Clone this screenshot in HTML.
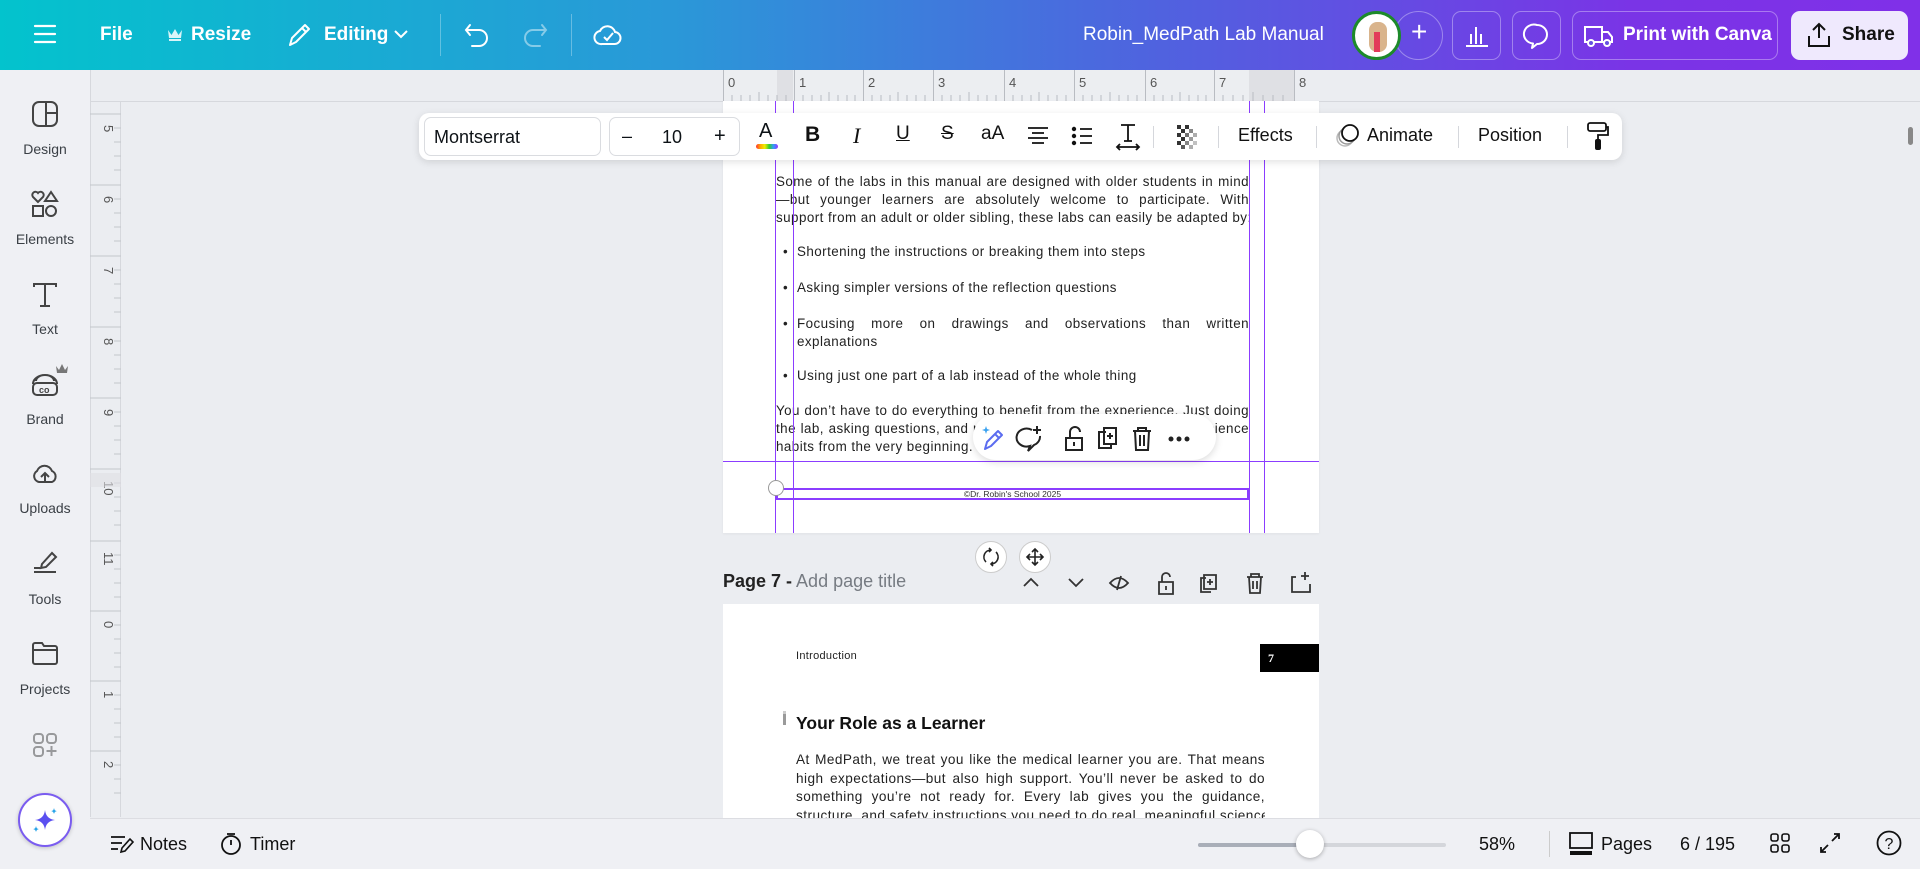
<!DOCTYPE html>
<html><head><meta charset="utf-8">
<style>
*{box-sizing:border-box;margin:0;padding:0}
body{width:1920px;height:869px;overflow:hidden;background:#ebedf1;font-family:"Liberation Sans",sans-serif;position:relative;color:#0d1216}
.a{position:absolute}
.hdr{left:0;top:0;width:1920px;height:70px;background:linear-gradient(90deg,#03c3cd 0%,#2a98d8 35%,#4f63df 60%,#7a34e6 85%,#8030e8 100%)}
.hw{color:#fff;font-size:19px;font-weight:bold;top:24px}
.hb{top:11px;height:49px;border:1px solid rgba(255,255,255,.35);border-radius:9px}
.side{left:0;top:70px;width:90px;height:799px;background:#eff0f4}
.si{left:0;width:90px;text-align:center;font-size:14px;color:#3a3f45}
.page{background:#fff}
.vl{width:1px;background:#8b3dff}
.txt{font-size:13.4px;line-height:17.8px;color:#222;letter-spacing:.45px;white-space:nowrap}
.j{text-align:justify;text-align-last:justify;white-space:nowrap}
.tb{left:419px;top:113px;width:1203px;height:47px;background:#fff;border-radius:10px;box-shadow:0 2px 8px rgba(0,0,0,.12)}
.tdiv{width:1px;height:22px;background:#d5d7dc;top:13px}
.ti{top:10px;font-size:19px;color:#111}
.bot{left:90px;top:818px;width:1830px;height:51px;background:#eff0f4;border-top:1px solid #dcdde2}
.bt{top:15px;font-size:18px;color:#111}
svg{overflow:visible}
</style></head><body>

<div class="a hdr">
 <svg class="a" style="left:34px;top:24px" width="22" height="20"><path d="M1 2H21M1 10H21M1 18H21" stroke="#fff" stroke-width="2.2" stroke-linecap="round"/></svg>
 <div class="a hw" style="left:100px">File</div>
 <svg class="a" style="left:167px;top:27px" width="16" height="14"><path d="M1 3L4.5 8L8 2L11.5 8L15 3L14 11H2Z" fill="#fff" opacity=".85"/><rect x="2" y="12" width="12" height="2" fill="#fff" opacity=".85"/></svg>
 <div class="a hw" style="left:191px">Resize</div>
 <svg class="a" style="left:287px;top:22px" width="24" height="26"><path d="M3 23L5 16L18 3L22 7L9 20Z M15 6L19 10" fill="none" stroke="#fff" stroke-width="2" stroke-linejoin="round"/></svg>
 <div class="a hw" style="left:324px">Editing</div>
 <svg class="a" style="left:394px;top:30px" width="14" height="9"><path d="M1 1L7 7L13 1" fill="none" stroke="#fff" stroke-width="2"/></svg>
 <div class="a" style="left:440px;top:14px;width:1px;height:42px;background:rgba(255,255,255,.3)"></div>
 <svg class="a" style="left:464px;top:22px" width="26" height="26"><path d="M6 3L2 8L6 13M2 8H15A8 8 0 0 1 15 24H8" fill="none" stroke="#fff" stroke-width="2" stroke-linecap="round"/></svg>
 <svg class="a" style="left:522px;top:22px" width="26" height="26" opacity=".45"><path d="M20 3L24 8L20 13M24 8H11A8 8 0 0 0 11 24H18" fill="none" stroke="#fff" stroke-width="2" stroke-linecap="round"/></svg>
 <div class="a" style="left:571px;top:14px;width:1px;height:42px;background:rgba(255,255,255,.3)"></div>
 <svg class="a" style="left:594px;top:20px" width="28" height="28"><path d="M8 24H20A6 6 0 0 0 21 12A8 8 0 0 0 6 11A6.5 6.5 0 0 0 8 24Z" fill="none" stroke="#fff" stroke-width="2"/><path d="M10 17L13 20L19 13" fill="none" stroke="#fff" stroke-width="2"/></svg>
 <div class="a" style="left:1083px;top:24px;color:#fff;font-size:19px">Robin_MedPath Lab Manual</div>
 <div class="a" style="left:1394px;top:11px;width:49px;height:49px;border:1px solid rgba(255,255,255,.35);border-radius:50%"></div>
 <div class="a" style="left:1411px;top:16px;color:#fff;font-size:28px;font-weight:300">+</div>
 <div class="a" style="left:1352px;top:11px;width:49px;height:49px;border-radius:50%;background:#fff;border:3px solid #1d8a2a;overflow:hidden"><div class="a" style="left:14px;top:8px;width:18px;height:30px;background:#d9b48c;border-radius:8px"></div><div class="a" style="left:19px;top:18px;width:6px;height:20px;background:#e23b5a"></div></div>
 <div class="a hb" style="left:1452px;width:49px"></div>
 <svg class="a" style="left:1465px;top:24px" width="24" height="24"><path d="M1 22H23M6 20V10M11 20V3M16 20V10" stroke="#fff" stroke-width="2"/></svg>
 <div class="a hb" style="left:1512px;width:49px"></div>
 <svg class="a" style="left:1524px;top:23px" width="26" height="26"><path d="M13 2A10 9.5 0 1 0 9 20.5L8 25L13 21A10 9.5 0 0 0 13 2Z" fill="none" stroke="#fff" stroke-width="2" stroke-linejoin="round"/></svg>
 <div class="a hb" style="left:1572px;width:206px"></div>
 <svg class="a" style="left:1584px;top:25px" width="30" height="22"><path d="M1 2H18V17H1Z M18 7H24L28 12V17H18" fill="none" stroke="#fff" stroke-width="2"/><circle cx="7" cy="18" r="3" fill="#6650e2" stroke="#fff" stroke-width="2"/><circle cx="23" cy="18" r="3" fill="#6650e2" stroke="#fff" stroke-width="2"/></svg>
 <div class="a hw" style="left:1623px">Print with Canva</div>
 <div class="a" style="left:1791px;top:11px;width:117px;height:49px;background:#efe9fd;border-radius:9px"></div>
 <svg class="a" style="left:1806px;top:22px" width="26" height="26"><path d="M13 16V2M7 8L13 2L19 8M3 14V24H23V14" fill="none" stroke="#111" stroke-width="2"/></svg>
 <div class="a" style="left:1842px;top:24px;font-size:19px;font-weight:bold;color:#111">Share</div>
</div>

<div class="a side"></div>
<svg class="a" style="left:32px;top:101px" width="26" height="26"><rect x="1" y="1" width="24" height="24" rx="6" fill="none" stroke="#444" stroke-width="2"/><path d="M14 1V25M14 12H25" stroke="#444" stroke-width="2"/></svg>
<div class="a si" style="top:141px">Design</div>
<svg class="a" style="left:32px;top:191px" width="26" height="26"><path d="M6 11L1 6A3 3 0 0 1 6 2A3 3 0 0 1 11 6Z" fill="none" stroke="#444" stroke-width="2"/><path d="M19 1L25 10H13Z" fill="none" stroke="#444" stroke-width="2"/><rect x="1" y="15" width="10" height="10" fill="none" stroke="#444" stroke-width="2"/><circle cx="19" cy="20" r="5" fill="none" stroke="#444" stroke-width="2"/></svg>
<div class="a si" style="top:231px">Elements</div>
<svg class="a" style="left:33px;top:283px" width="24" height="24"><path d="M1 4V1H23V4M12 1V23M7 23H17" fill="none" stroke="#444" stroke-width="2"/></svg>
<div class="a si" style="top:321px">Text</div>
<svg class="a" style="left:31px;top:372px" width="28" height="24"><path d="M2 12A12 9 0 0 1 26 12M5 9A9 6 0 0 1 23 9" fill="none" stroke="#444" stroke-width="2"/><rect x="2" y="11" width="24" height="12" rx="4" fill="none" stroke="#444" stroke-width="2"/><text x="8" y="21" font-size="9" font-weight="bold" fill="#444" font-family="Liberation Sans">co</text></svg>
<svg class="a" style="left:56px;top:364px" width="12" height="9"><path d="M0 2L3 6L6 0L9 6L12 2L11 9H1Z" fill="#777"/></svg>
<div class="a si" style="top:411px">Brand</div>
<svg class="a" style="left:31px;top:462px" width="28" height="22"><path d="M8 20H21A6 6 0 0 0 21 9A8 8 0 0 0 6 9A6 6 0 0 0 8 20Z" fill="none" stroke="#444" stroke-width="2"/><path d="M14 20V12M10 15L14 11L18 15" fill="none" stroke="#444" stroke-width="2"/></svg>
<div class="a si" style="top:500px">Uploads</div>
<svg class="a" style="left:32px;top:550px" width="28" height="24"><path d="M10 14L20 3L24 7L14 17L9 18Z" fill="none" stroke="#444" stroke-width="2"/><path d="M2 18H8M2 22H24" stroke="#444" stroke-width="2"/></svg>
<div class="a si" style="top:591px">Tools</div>
<svg class="a" style="left:32px;top:641px" width="26" height="24"><path d="M1 4A2 2 0 0 1 3 2H10L12 5H23A2 2 0 0 1 25 7V21A2 2 0 0 1 23 23H3A2 2 0 0 1 1 21Z M1 9H25" fill="none" stroke="#444" stroke-width="2"/></svg>
<div class="a si" style="top:681px">Projects</div>
<svg class="a" style="left:33px;top:733px" width="24" height="24" opacity=".5"><rect x="1" y="1" width="9" height="9" rx="3" fill="none" stroke="#444" stroke-width="2"/><rect x="14" y="1" width="9" height="9" rx="3" fill="none" stroke="#444" stroke-width="2"/><rect x="1" y="14" width="9" height="9" rx="3" fill="none" stroke="#444" stroke-width="2"/><path d="M18.5 13V23M13.5 18H23.5" stroke="#444" stroke-width="2"/></svg>
<div class="a" style="left:18px;top:793px;width:54px;height:54px;border-radius:50%;background:#fff;border:2px solid #7a5cf0;box-shadow:0 1px 4px rgba(0,0,0,.2)"></div>
<svg class="a" style="left:30px;top:806px" width="30" height="28"><path d="M15 4Q16 13 25 14Q16 15 15 24Q14 15 5 14Q14 13 15 4Z" fill="#5a4ff0"/><path d="M24 2Q24.5 5 27 5Q24.5 5.5 24 8Q23.5 5.5 21 5Q23.5 5 24 2Z" fill="#2aa5e8"/><path d="M6 20Q6.5 23 9 23Q6.5 23.5 6 26Q5.5 23.5 3 23Q5.5 23 6 20Z" fill="#2aa5e8"/></svg>

<!-- rulers -->
<div class="a" style="left:90px;top:70px;width:1px;height:747px;background:#d6d8dd"></div>
<div class="a" style="left:120px;top:101px;width:1px;height:716px;background:#d6d8dd"></div>
<div class="a" style="left:90px;top:101px;width:1830px;height:1px;background:#d6d8dd"></div>
<div class="a" style="left:723px;top:70px;width:572px;height:31px;background:#eceef1"></div>
<div class="a" style="left:777px;top:70px;width:16px;height:31px;background:#dfe0e4"></div>
<div class="a" style="left:1249px;top:70px;width:45px;height:31px;background:#dfe0e4"></div>
<svg class="a" style="left:723px;top:70px" width="572" height="31">
<g stroke="#b9bcc2" stroke-width="1">
<path d="M0.5 0V31M71.5 0V31M140.5 0V31M210.5 0V31M281.5 0V31M351.5 0V31M422.5 0V31M491.5 0V31M571.5 0V31"/>
<path d="M9 25V31M18 25V31M27 25V31M36 22V31M45 25V31M54 25V31M63 25V31M80 25V31M89 25V31M98 25V31M106 22V31M115 25V31M124 25V31M132 25V31M149 25V31M158 25V31M167 25V31M175 22V31M184 25V31M193 25V31M202 25V31M219 25V31M228 25V31M237 25V31M246 22V31M255 25V31M264 25V31M273 25V31M290 25V31M299 25V31M308 25V31M316 22V31M325 25V31M334 25V31M343 25V31M360 25V31M369 25V31M378 25V31M387 22V31M396 25V31M405 25V31M414 25V31M431 25V31M440 25V31M449 25V31M457 22V31M466 25V31M475 25V31M483 25V31M500 25V31M510 25V31M520 25V31M530 22V31M540 25V31M550 25V31M560 25V31"/>
</g>
<g font-family="Liberation Sans" font-size="13" fill="#555">
<text x="5" y="17">0</text><text x="76" y="17">1</text><text x="145" y="17">2</text><text x="215" y="17">3</text><text x="286" y="17">4</text><text x="356" y="17">5</text><text x="427" y="17">6</text><text x="496" y="17">7</text><text x="576" y="17">8</text>
</g></svg>
<svg class="a" style="left:90px;top:101px" width="31" height="716">
<g font-family="Liberation Sans" font-size="13" fill="#555">
<text transform="translate(14,24) rotate(90)">5</text><text transform="translate(14,95) rotate(90)">6</text><text transform="translate(14,166) rotate(90)">7</text><text transform="translate(14,237) rotate(90)">8</text><text transform="translate(14,308) rotate(90)">9</text><text transform="translate(14,380) rotate(90)">10</text><text transform="translate(14,451) rotate(90)">11</text><text transform="translate(14,520) rotate(90)">0</text><text transform="translate(14,590) rotate(90)">1</text><text transform="translate(14,660) rotate(90)">2</text>
</g>
<g stroke="#c3c6cc"><path d="M0 13H31M0 84H31M0 155H31M0 226H31M0 297H31M0 368H31M0 440H31M0 510H31M0 580H31M0 650H31"/>
<path d="M24 27H31M24 41H31M24 55H31M24 69H31M24 98H31M24 112H31M24 126H31M24 140H31M24 169H31M24 183H31M24 197H31M24 211H31M24 240H31M24 254H31M24 268H31M24 282H31M24 311H31M24 325H31M24 339H31M24 353H31M24 382H31M24 396H31M24 410H31M24 424H31M24 454H31M24 468H31M24 482H31M24 496H31M24 524H31M24 538H31M24 552H31M24 566H31M24 594H31M24 608H31M24 622H31M24 636H31M24 664H31M24 678H31M24 692H31"/></g>
<rect x="0" y="372" width="31" height="14" fill="#dfe0e4" opacity=".6"/>
</svg>

<!-- page 6 -->
<div class="a page" style="left:723px;top:101px;width:596px;height:432px;box-shadow:0 1px 3px rgba(0,0,0,.05)"></div>
<div class="a txt j" style="left:776px;top:173px;width:473px">Some of the labs in this manual are designed with older students in mind</div>
<div class="a txt j" style="left:776px;top:191px;width:473px">—but younger learners are absolutely welcome to participate. With</div>
<div class="a txt j" style="left:776px;top:209px;width:473px">support from an adult or older sibling, these labs can easily be adapted by:</div>
<div class="a txt" style="left:783px;top:243px">•</div><div class="a txt" style="left:797px;top:243px">Shortening the instructions or breaking them into steps</div>
<div class="a txt" style="left:783px;top:279px">•</div><div class="a txt" style="left:797px;top:279px">Asking simpler versions of the reflection questions</div>
<div class="a txt" style="left:783px;top:315px">•</div><div class="a txt j" style="left:797px;top:315px;width:452px">Focusing more on drawings and observations than written</div>
<div class="a txt" style="left:797px;top:333px">explanations</div>
<div class="a txt" style="left:783px;top:367px">•</div><div class="a txt" style="left:797px;top:367px">Using just one part of a lab instead of the whole thing</div>
<div class="a txt j" style="left:776px;top:402px;width:473px">You don’t have to do everything to benefit from the experience. Just doing</div>
<div class="a txt j" style="left:776px;top:420px;width:473px">the lab, asking questions, and reflecting will help you build strong science</div>
<div class="a txt" style="left:776px;top:438px">habits from the very beginning.</div>
<div class="a vl" style="left:775px;top:101px;height:432px"></div>
<div class="a vl" style="left:793px;top:101px;height:432px"></div>
<div class="a vl" style="left:1249px;top:101px;height:432px"></div>
<div class="a vl" style="left:1264px;top:101px;height:432px"></div>
<div class="a" style="left:723px;top:461px;width:596px;height:1px;background:#8b3dff"></div>
<div class="a" style="left:776px;top:488px;width:473px;height:12px;border:2px solid #8b3dff;font-size:8.5px;line-height:8px;text-align:center;color:#333">©Dr. Robin's School 2025</div>
<div class="a" style="left:768px;top:480px;width:16px;height:16px;border-radius:50%;background:#fff;border:1px solid #999"></div>
<div class="a" style="left:973px;top:414px;width:243px;height:46px;background:#fff;border-radius:23px;box-shadow:0 2px 8px rgba(0,0,0,.15)"></div>
<svg class="a" style="left:980px;top:424px" width="230" height="28">
<path d="M5 25L7 18L18 7L22 11L11 22Z M15 10L19 14" fill="none" stroke="#5b6cf0" stroke-width="2" stroke-linejoin="round"/>
<path d="M6 2L7 5L10 6L7 7L6 10L5 7L2 6L5 5Z" fill="#3aa2f0"/>
<path d="M52 6A10 9 0 1 0 50 22L48 27L54 21A10 9 0 0 0 60 12M57 2V10M53 6H61" fill="none" stroke="#222" stroke-width="2"/>
<path d="M86 14V26H102V14Z M90 14V8A5 5 0 0 1 100 8" fill="none" stroke="#222" stroke-width="2"/><path d="M94 18V22" stroke="#222" stroke-width="2"/>
<path d="M126 8H119V24H131V20 M124 4H136V20H124Z M130 9V15M127 12H133" fill="none" stroke="#222" stroke-width="2"/>
<path d="M153 7H171M158 7V4H166V7M155 7L156 26H168L169 7M160 11V22M164 11V22" fill="none" stroke="#222" stroke-width="2"/>
<circle cx="191" cy="15" r="2.5" fill="#222"/><circle cx="199" cy="15" r="2.5" fill="#222"/><circle cx="207" cy="15" r="2.5" fill="#222"/>
</svg>
<div class="a" style="left:975px;top:541px;width:32px;height:32px;border-radius:50%;background:#fff;border:1px solid #ccc"></div>
<div class="a" style="left:1019px;top:541px;width:32px;height:32px;border-radius:50%;background:#fff;border:1px solid #ccc"></div>
<svg class="a" style="left:982px;top:548px" width="18" height="18"><path d="M4 14A7 7 0 0 1 9 2M14 4A7 7 0 0 1 9 16M7 0L9 2L7 4M11 14L9 16L11 18" fill="none" stroke="#222" stroke-width="1.6"/></svg>
<svg class="a" style="left:1026px;top:548px" width="18" height="18"><path d="M9 1V17M1 9H17M6 4L9 1L12 4M6 14L9 17L12 14M4 6L1 9L4 12M14 6L17 9L14 12" fill="none" stroke="#222" stroke-width="1.6"/></svg>

<div class="a" style="left:723px;top:571px;font-size:18px;color:#222"><b>Page 7 -</b> <span style="color:#767b82">Add page title</span></div>
<svg class="a" style="left:1020px;top:570px" width="300" height="26">
<path d="M4 16L11 9L18 16" fill="none" stroke="#333" stroke-width="1.8"/>
<path d="M49 9L56 16L63 9" fill="none" stroke="#333" stroke-width="1.8"/>
<path d="M90 13Q99 3 108 13Q99 23 90 13Z M101 6L97 20" fill="none" stroke="#333" stroke-width="1.8"/>
<path d="M139 12H153V24H139Z M142 12V7A4 4 0 0 1 150 7" fill="none" stroke="#333" stroke-width="1.8"/><path d="M146 16V20" stroke="#333" stroke-width="1.8"/>
<path d="M186 8H181V22H191 M184 5H196V19H184Z M190 9V15M187 12H193" fill="none" stroke="#333" stroke-width="1.8"/>
<path d="M227 7H243M231 7V4H239V7M229 7L230 23H240L241 7M233 11V19M237 11V19" fill="none" stroke="#333" stroke-width="1.8"/>
<path d="M276 7H272V22H290V14M285 2V10M281 6H289" fill="none" stroke="#333" stroke-width="1.8"/>
</svg>

<div class="a page" style="left:723px;top:604px;width:596px;height:214px"></div>
<div class="a" style="left:796px;top:650px;font-size:11px;color:#222;letter-spacing:.3px">Introduction</div>
<div class="a" style="left:1260px;top:644px;width:59px;height:28px;background:#000;color:#fff;font-family:'Liberation Serif',serif;font-weight:bold;font-size:12px;padding:7px 0 0 8px">7</div>
<div class="a" style="left:783px;top:711px;width:3px;height:14px;background:#9a9a9a;border-top:3px solid #ccc"></div>
<div class="a" style="left:796px;top:713px;font-size:17.5px;font-weight:bold;color:#111">Your Role as a Learner</div>
<div class="a" style="left:796px;top:751px;width:469px;height:67px;overflow:hidden">
<div class="txt j" style="font-size:13.6px;line-height:18.5px;width:469px">At MedPath, we treat you like the medical learner you are. That means</div>
<div class="txt j" style="font-size:13.6px;line-height:18.5px;width:469px">high expectations—but also high support. You’ll never be asked to do</div>
<div class="txt j" style="font-size:13.6px;line-height:18.5px;width:469px">something you’re not ready for. Every lab gives you the guidance,</div>
<div class="txt j" style="font-size:13.6px;line-height:18.5px;width:469px">structure, and safety instructions you need to do real, meaningful science</div>
</div>

<div class="a tb">
 <div class="a" style="left:5px;top:4px;width:177px;height:39px;border:1px solid #dadce0;border-radius:7px;font-size:18px;padding:9px 0 0 9px">Montserrat</div>
 <div class="a" style="left:190px;top:4px;width:131px;height:39px;border:1px solid #dadce0;border-radius:7px;font-size:18px">
  <span class="a" style="left:12px;top:8px">–</span><span class="a" style="left:52px;top:9px">10</span><span class="a" style="left:104px;top:7px;font-size:20px">+</span></div>
 <div class="a" style="left:340px;top:7px;font-size:20px">A</div>
 <div class="a" style="left:337px;top:31px;width:22px;height:5px;border-radius:3px;background:linear-gradient(90deg,#f33,#fa0,#ee0,#3c3,#39f,#93f)"></div>
 <div class="a ti" style="left:386px;font-weight:bold;font-size:21px">B</div>
 <div class="a ti" style="left:434px;font-style:italic;font-family:'Liberation Serif',serif;font-size:22px">I</div>
 <div class="a ti" style="left:477px;text-decoration:underline">U</div>
 <div class="a ti" style="left:522px;text-decoration:line-through">S</div>
 <div class="a ti" style="left:562px">aA</div>
 <svg class="a" style="left:608px;top:14px" width="22" height="18"><path d="M1 1H21M5 6H17M1 11H21M5 16H17" stroke="#111" stroke-width="1.8"/></svg>
 <svg class="a" style="left:652px;top:13px" width="22" height="20"><circle cx="3" cy="3" r="2.2" fill="#111"/><circle cx="3" cy="10" r="2.2" fill="#111"/><circle cx="3" cy="17" r="2.2" fill="#111"/><path d="M9 3H21M9 10H21M9 17H21" stroke="#111" stroke-width="1.8"/></svg>
 <svg class="a" style="left:697px;top:10px" width="24" height="28"><path d="M5 2H19M12 2V18M8 18H16M1 24H23M4 21L1 24L4 27M20 21L23 24L20 27" fill="none" stroke="#111" stroke-width="1.8"/></svg>
 <div class="a tdiv" style="left:734px"></div>
 <svg class="a" style="left:758px;top:12px" width="22" height="24"><g fill="#333"><rect x="0" y="0" width="4" height="4"/><rect x="8" y="0" width="4" height="4"/><rect x="4" y="4" width="4" height="4"/><rect x="12" y="4" width="4" height="4" opacity=".6"/><rect x="0" y="8" width="4" height="4"/><rect x="8" y="8" width="4" height="4" opacity=".7"/><rect x="16" y="8" width="4" height="4" opacity=".4"/><rect x="4" y="12" width="4" height="4"/><rect x="12" y="12" width="4" height="4" opacity=".5"/><rect x="0" y="16" width="4" height="4"/><rect x="8" y="16" width="4" height="4" opacity=".6"/><rect x="16" y="16" width="4" height="4" opacity=".3"/><rect x="4" y="20" width="4" height="4" opacity=".8"/><rect x="12" y="20" width="4" height="4" opacity=".4"/></g></svg>
 <div class="a tdiv" style="left:799px"></div>
 <div class="a ti" style="left:819px;top:12px;font-size:18px">Effects</div>
 <div class="a tdiv" style="left:897px"></div>
 <svg class="a" style="left:917px;top:10px" width="26" height="26"><circle cx="9" cy="15" r="8" fill="none" stroke="#bbb" stroke-width="1.5"/><circle cx="11" cy="13" r="8" fill="#fff" stroke="#999" stroke-width="1.5"/><circle cx="14" cy="10" r="8" fill="#fff" stroke="#111" stroke-width="1.8"/></svg>
 <div class="a ti" style="left:948px;top:12px;font-size:18px">Animate</div>
 <div class="a tdiv" style="left:1039px"></div>
 <div class="a ti" style="left:1059px;top:12px;font-size:18px">Position</div>
 <div class="a tdiv" style="left:1148px"></div>
 <svg class="a" style="left:1168px;top:9px" width="22" height="30"><rect x="1" y="1" width="18" height="8" rx="2" fill="none" stroke="#111" stroke-width="1.8"/><path d="M19 5H21V13H11V17" fill="none" stroke="#111" stroke-width="1.8"/><rect x="8" y="17" width="6" height="11" rx="2" fill="#111"/></svg>
</div>
<div class="a" style="left:1908px;top:127px;width:5px;height:18px;border-radius:3px;background:#888"></div>

<div class="a bot">
 <svg class="a" style="left:20px;top:15px" width="24" height="20"><path d="M1 3H15M1 9H12M1 15H8" stroke="#111" stroke-width="1.8"/><path d="M11 18L12 14L20 5L23 8L15 17Z" fill="none" stroke="#111" stroke-width="1.6"/></svg>
 <div class="a bt" style="left:50px">Notes</div>
 <svg class="a" style="left:130px;top:13px" width="22" height="24"><circle cx="11" cy="13" r="9" fill="none" stroke="#111" stroke-width="1.8"/><path d="M7 2H15M11 13V8" stroke="#111" stroke-width="1.8"/></svg>
 <div class="a bt" style="left:160px">Timer</div>
 <div class="a" style="left:1108px;top:24px;width:248px;height:4px;border-radius:2px;background:#d4d6db"></div>
 <div class="a" style="left:1108px;top:24px;width:112px;height:4px;border-radius:2px;background:#a9aeb8"></div>
 <div class="a" style="left:1206px;top:11px;width:28px;height:28px;border-radius:50%;background:#fff;box-shadow:0 1px 4px rgba(0,0,0,.3)"></div>
 <div class="a bt" style="left:1389px">58%</div>
 <div class="a" style="left:1459px;top:12px;width:1px;height:26px;background:#ccc"></div>
 <svg class="a" style="left:1479px;top:13px" width="24" height="24"><rect x="1" y="1" width="22" height="15" fill="none" stroke="#111" stroke-width="1.8"/><rect x="1" y="19" width="22" height="4" fill="#111"/></svg>
 <div class="a bt" style="left:1511px">Pages</div>
 <div class="a bt" style="left:1590px">6 / 195</div>
 <svg class="a" style="left:1680px;top:14px" width="20" height="20"><rect x="1" y="1" width="7" height="7" rx="2" fill="none" stroke="#111" stroke-width="1.6"/><rect x="12" y="1" width="7" height="7" rx="2" fill="none" stroke="#111" stroke-width="1.6"/><rect x="1" y="12" width="7" height="7" rx="2" fill="none" stroke="#111" stroke-width="1.6"/><rect x="12" y="12" width="7" height="7" rx="2" fill="none" stroke="#111" stroke-width="1.6"/></svg>
 <svg class="a" style="left:1730px;top:14px" width="20" height="20"><path d="M12 8L19 1M14 1H19V6M8 12L1 19M1 14V19H6" fill="none" stroke="#111" stroke-width="1.8"/></svg>
 <svg class="a" style="left:1786px;top:11px" width="26" height="26"><circle cx="13" cy="13" r="11.5" fill="none" stroke="#111" stroke-width="1.8"/><text x="8.5" y="19" font-size="16" font-family="Liberation Sans" fill="#111">?</text></svg>
</div>
</body></html>
